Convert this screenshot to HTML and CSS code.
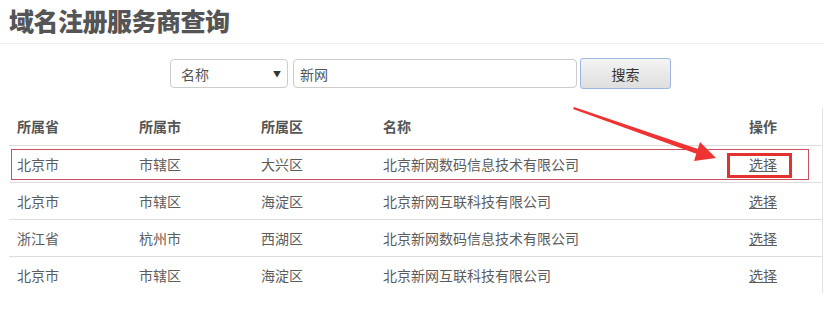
FILE: index.html
```html
<!DOCTYPE html>
<html lang="zh-CN">
<head>
<meta charset="utf-8">
<title>域名注册服务商查询</title>
<link rel="stylesheet" href="styles.css">
</head>
<body>
<div class="page">
  <h1 class="title">域名注册服务商查询</h1>
  <form class="search">
    <div class="select"><span>名称</span><span class="caret">▼</span></div>
    <div class="input">新网</div>
    <button type="button" class="btn">搜索</button>
  </form>
  <div class="table-wrap">
    <table class="grid">
      <colgroup>
        <col class="c1"><col class="c2"><col class="c3"><col class="c4"><col class="c5">
      </colgroup>
      <thead>
        <tr><th>所属省</th><th>所属市</th><th>所属区</th><th>名称</th><th>操作</th></tr>
      </thead>
      <tbody>
        <tr><td>北京市</td><td>市辖区</td><td>大兴区</td><td>北京新网数码信息技术有限公司</td><td><a href="#">选择</a></td></tr>
        <tr><td>北京市</td><td>市辖区</td><td>海淀区</td><td>北京新网互联科技有限公司</td><td><a href="#">选择</a></td></tr>
        <tr><td>浙江省</td><td>杭州市</td><td>西湖区</td><td>北京新网数码信息技术有限公司</td><td><a href="#">选择</a></td></tr>
        <tr><td>北京市</td><td>市辖区</td><td>海淀区</td><td>北京新网互联科技有限公司</td><td><a href="#">选择</a></td></tr>
      </tbody>
    </table>
  </div>
  <div class="mark-row"></div>
  <div class="mark-btn"></div>
  <svg class="arrow" width="824" height="314" viewBox="0 0 824 314">
    <polygon points="574,107 698,149 697,154 573,109" fill="#ee3333"/>
    <polygon points="716,158 700,142 694,161" fill="#ee3333"/>
  </svg>
</div>
</body>
</html>
```
FILE: styles.css
```css
* { box-sizing: border-box; }
html, body { margin: 0; padding: 0; background: #fff; }
body {
  font-family: "Microsoft YaHei", "Noto Sans CJK SC", "Liberation Sans", sans-serif;
  color: #5c5c5c;
  font-size: 14px;
}
.page { position: relative; width: 824px; height: 314px; overflow: hidden; }
.title {
  margin: 0;
  height: 44px;
  padding: 4px 0 0 9px;
  font-size: 25px;
  line-height: 32px;
  font-weight: 900;
  letter-spacing: -0.5px;
  color: #555;
  border-bottom: 1px solid #eee;
}
.search {
  display: flex;
  align-items: center;
  margin: 14px 0 0 170px;
  height: 31px;
}
.select {
  width: 118px;
  height: 29px;
  border: 1px solid #ccc;
  border-radius: 4px;
  display: flex;
  align-items: center;
  justify-content: space-between;
  padding: 0 6px 0 10px;
  font-size: 14px;
  color: #555;
}
.caret { font-size: 8px; color: #333; }
.input {
  width: 284px;
  height: 29px;
  margin-left: 5px;
  border: 1px solid #ccc;
  border-radius: 4px;
  display: flex;
  align-items: center;
  padding-left: 6px;
  color: #555;
}
.btn {
  width: 91px;
  height: 31px;
  margin-left: 3px;
  border: 1px solid #9db6e4;
  border-radius: 3px;
  background: linear-gradient(#f4f4f4, #dedede);
  font-family: inherit;
  font-size: 14px;
  color: #333;
  padding: 0;
}
.table-wrap {
  margin: 19px 0 0 9px;
  width: 814px;
  border-right: 1px solid #e2e2e2;
}
.grid {
  width: 813px;
  border-collapse: collapse;
  table-layout: fixed;
}
.c1, .c2, .c3 { width: 122px; }
.c4 { width: 366px; }
.c5 { width: 81px; }
.grid th, .grid td {
  height: 37px;
  padding: 0 8px;
  text-align: left;
  vertical-align: middle;
  white-space: nowrap;
  font-size: 14px;
}
.grid th { font-weight: bold; color: #555; border-bottom: 1px solid #ddd; }
.grid td { border-bottom: 1px solid #ddd; color: #5c5c5c; }
.grid tbody tr:last-child td { border-bottom: none; }
.grid a { color: #5c5c5c; text-decoration: underline; }
.mark-row {
  position: absolute;
  left: 11px; top: 149px;
  width: 798px; height: 31px;
  border: 1px solid #c9505e;
}
.mark-btn {
  position: absolute;
  left: 727px; top: 153px;
  width: 65px; height: 25px;
  border: 3px solid #e53030;
}
.arrow { position: absolute; left: 0; top: 0; }
```
